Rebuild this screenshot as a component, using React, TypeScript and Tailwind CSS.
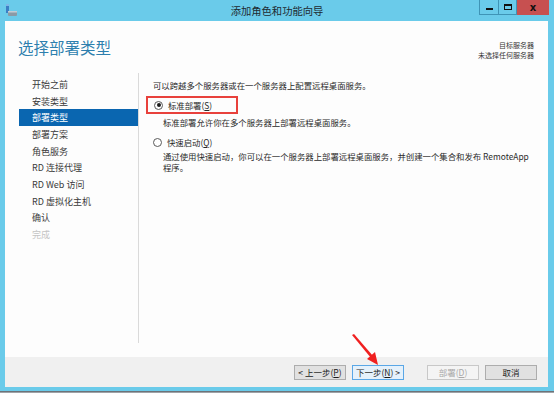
import React from "react";

const NAV_ITEMS = [
    { label: "开始之前" },
    { label: "安装类型" },
    { label: "部署类型", active: true },
    { label: "部署方案" },
    { label: "角色服务" },
    { label: "RD 连接代理" },
    { label: "RD Web 访问" },
    { label: "RD 虚拟化主机" },
    { label: "确认" },
    { label: "完成", disabled: true },
];

const Radio = ({ checked }: { checked?: boolean }) => (
    <span className="w-[9px] h-[9px] rounded-full border border-[#5a5a5a] bg-white flex items-center justify-center shrink-0">
        {checked && <span className="w-[4px] h-[4px] rounded-full bg-[#1a1a1a]" />}
    </span>
);

const WizardButton = ({ children, variant }: { children: React.ReactNode; variant?: "primary" | "disabled" }) => {
    const cls =
        variant === "primary"
            ? "border-[#5aa7e6] bg-[#e5f1fb] text-[#1a1a1a]"
            : variant === "disabled"
                ? "border-[#c8c8c8] bg-[#f4f4f4] text-[#a8a8a8]"
                : "border-[#adadad] bg-[#e1e1e1] text-[#1a1a1a]";
    return (
        <div className={`w-[52px] h-[15px] border flex items-center justify-center text-[8.5px] leading-none ${cls}`}>
            {children}
        </div>
    );
};

export default function App() {
    return (
        <div
            className="relative w-[554px] h-[393px] bg-[#6acbea] flex flex-col overflow-hidden"
            style={{ fontFamily: '"Noto Sans CJK SC", "Noto Sans", sans-serif' }}
        >
            {/* title bar */}
            <div className="h-[21px] flex items-start relative shrink-0">
                <svg width="14" height="14" viewBox="0 0 14 14" className="absolute left-[5px] top-[4px]">
                    <rect x="1" y="0" width="3" height="9" fill="#3a7fc4" />
                    <rect x="1" y="0" width="3" height="2" fill="#7fb6e6" />
                    <rect x="3" y="7" width="9" height="5" rx="1" fill="#8a9aa6" />
                    <rect x="3" y="7" width="9" height="1.5" fill="#c2ccd4" />
                </svg>
                <div className="flex-1 h-[21px] flex items-center justify-center text-[10.3px] text-[#1e2a30]">
                    添加角色和功能向导
                </div>
                <div className="absolute left-[479px] top-0 flex h-[15px]">
                    <div className="w-[20px] h-[15px] border border-t-0 border-[#3f94b6] flex items-end justify-center pb-[4px]">
                        <span className="w-[7px] h-[2px] bg-[#111]" />
                    </div>
                    <div className="w-[18px] h-[15px] border border-t-0 border-l-0 border-[#3f94b6] flex items-center justify-center">
                        <span className="w-[8px] h-[6px] border border-[#111] border-t-2" />
                    </div>
                    <div className="w-[32px] h-[15px] bg-[#c75050] flex items-center justify-center text-[10px] font-bold text-[#111] leading-none" style={{ fontFamily: '"DejaVu Sans", sans-serif' }}>
                        x
                    </div>
                </div>
            </div>

            {/* window body */}
            <div className="ml-[5px] mr-[6px] flex flex-col">
                <div className="h-[336px] bg-[#fdfdfd] flex flex-col">
                    <div className="h-[52px] flex justify-between items-start">
                        <div className="pl-[13px] pt-[19px] text-[15.5px] leading-none text-[#2d7fae]">选择部署类型</div>
                        <div className="pr-[14px] pt-[19px] flex flex-col items-end text-[7px] leading-[10px] text-[#333]">
                            <span>目标服务器</span>
                            <span>未选择任何服务器</span>
                        </div>
                    </div>
                    <div className="flex h-[270px]">
                        <div className="w-[134px] border-r border-[#dadada] pt-[3px] pl-[14px]">
                            {NAV_ITEMS.map((e, i) => (
                                <div
                                    key={i}
                                    className={`h-[16.7px] flex items-center pl-[13px] text-[9px] leading-none ${e.active ? "bg-[#0a66b0] text-white" : e.disabled ? "text-[#c4c4c4]" : "text-[#3a3a3a]"}`}
                                >
                                    {e.label}
                                </div>
                            ))}
                        </div>
                        <div className="flex-1 pl-[14px] pt-[7px] text-[8.4px] leading-[11px] text-[#2a2a2a]">
                            <div>可以跨越多个服务器或在一个服务器上配置远程桌面服务。</div>
                            <div className="mt-[5px] ml-[-7px] w-[92px] h-[18px] border-2 border-[#e8413c] flex items-center gap-[5px] pl-[6px]">
                                <Radio checked />
                                <span>标准部署(<span className="underline">S</span>)</span>
                            </div>
                            <div className="mt-[3px] pl-[10px]">标准部署允许你在多个服务器上部署远程桌面服务。</div>
                            <div className="mt-[9px] flex items-center gap-[5px]">
                                <Radio />
                                <span>快速启动(<span className="underline">Q</span>)</span>
                            </div>
                            <div className="mt-[3px] pl-[10px] leading-[11px]">
                                通过使用快速启动，你可以在一个服务器上部署远程桌面服务，并创建一个集合和发布 RemoteApp
                                <br />
                                程序。
                            </div>
                        </div>
                    </div>
                </div>
                <div className="h-[30px] bg-[#f0f0f0] flex items-center pl-[289px] pt-[1px]">
                    <div className="flex items-center">
                        <WizardButton>&lt; 上一步(<span className="underline">P</span>)</WizardButton>
                        <div className="ml-[6px]">
                            <WizardButton variant="primary">下一步(<span className="underline">N</span>) &gt;</WizardButton>
                        </div>
                        <div className="ml-[23px]">
                            <WizardButton variant="disabled">部署(<span className="underline">D</span>)</WizardButton>
                        </div>
                        <div className="ml-[6px]">
                            <WizardButton>取消</WizardButton>
                        </div>
                    </div>
                </div>
            </div>
            <div className="h-[4px] shrink-0" />
            <div className="flex-1 bg-[#9ea3a8] border-t border-[#6e7378]" />

            {/* red annotation arrow */}
            <svg className="absolute left-0 top-0 pointer-events-none" width="554" height="393">
                <polygon points="352,335 354,334 373,356 371,358" fill="#f02020" />
                <polygon points="378,365 367,359 375,352" fill="#f02020" />
            </svg>
        </div>
    );
}
